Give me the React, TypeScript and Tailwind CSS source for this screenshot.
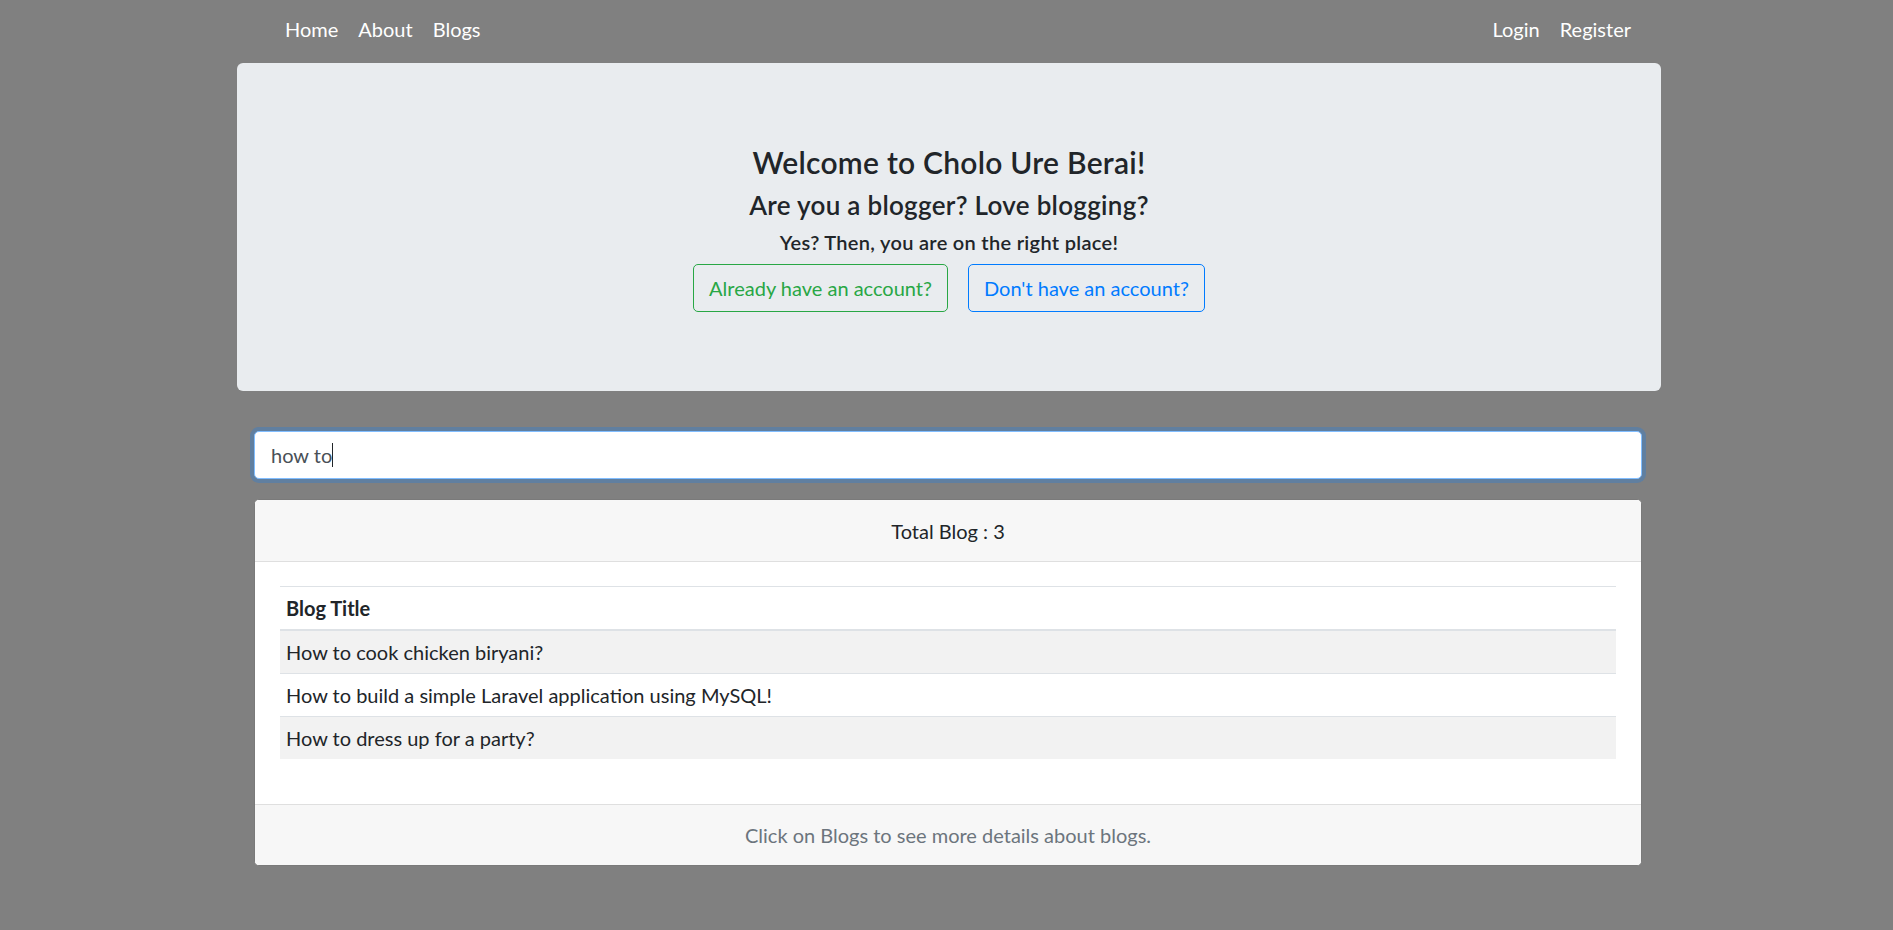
import React from "react";

const blogs = [
  "How to cook chicken biryani?",
  "How to build a simple Laravel application using MySQL!",
  "How to dress up for a party?",
];

const App = () => {
  return (
    <div className="min-h-screen bg-[#808080] [font-family:Lato,'Noto_Sans',sans-serif] text-[20px] leading-[30px] text-[#212529] pb-[40px]">
      <nav className="ml-[237px] w-[1424px] h-[63px] pb-[6px] flex items-center justify-between pl-[38px] pr-[20px] text-white">
        <div className="flex">
          {["Home", "About", "Blogs"].map((item) => (
            <a key={item} className="px-[10px] cursor-pointer">
              {item}
            </a>
          ))}
        </div>
        <div className="flex">
          {["Login", "Register"].map((item) => (
            <a key={item} className="px-[10px] cursor-pointer">
              {item}
            </a>
          ))}
        </div>
      </nav>

      <div className="ml-[237px] w-[1424px] rounded-[6px] bg-[#e9ecef] pt-[81px] pb-[79px] text-center mb-[40px]">
        <h4 className="text-[30px] leading-[36px] font-semibold tracking-[0.25px] mb-[10px]">
          Welcome to Cholo Ure Berai!
        </h4>
        <h5 className="text-[26px] leading-[30px] font-semibold tracking-[0.3px] mb-[10px]">
          Are you a blogger? Love blogging?
        </h5>
        <h6 className="text-[20px] leading-[24px] font-semibold tracking-[0.3px] mb-[10px]">
          Yes? Then, you are on the right place!
        </h6>
        <div className="flex justify-center gap-[20px]">
          <button className="h-[48px] px-[15px] border border-[#28a745] text-[#28a745] rounded-[5px]">
            Already have an account?
          </button>
          <button className="h-[48px] px-[15px] border border-[#007bff] text-[#007bff] rounded-[5px]">
            Don't have an account?
          </button>
        </div>
      </div>

      <div className="ml-[254px] w-[1388px]">
        <div className="h-[48px] rounded-[5px] border border-[#80bdff] shadow-[0_0_0_4px_rgba(0,123,255,0.25)] bg-white px-[16px] flex items-center text-[#495057]">
          <span>how to</span>
          <span className="w-[1px] h-[24px] bg-[#212529]" />
        </div>

        <div className="mt-[20px] rounded-[5px] border border-[#7a7a7a] bg-white overflow-hidden">
          <div className="h-[62px] bg-[#f7f7f7] border-b border-[#dfdfdf] flex items-center justify-center">
            Total Blog : 3
          </div>
          <div className="p-[25px] pt-[24px]">
            <table className="w-full mb-[20px] border-t border-[#dee2e6] text-left">
              <thead>
                <tr>
                  <th className="px-[6px] py-[6px] border-b-2 border-[#dee2e6] font-bold">
                    Blog Title
                  </th>
                </tr>
              </thead>
              <tbody>
                {blogs.map((blog, i) => (
                  <tr key={blog} className={i % 2 === 0 ? "bg-[#f2f2f2]" : "bg-white"}>
                    <td className={`px-[6px] py-[6px] ${i > 0 ? "border-t border-[#dee2e6]" : ""}`}>
                      {blog}
                    </td>
                  </tr>
                ))}
              </tbody>
            </table>
          </div>
          <div className="h-[61px] bg-[#f7f7f7] border-t border-[#dfdfdf] flex items-center justify-center text-[#6c757d]">
            Click on Blogs to see more details about blogs.
          </div>
        </div>
      </div>
    </div>
  );
};

export default App;
